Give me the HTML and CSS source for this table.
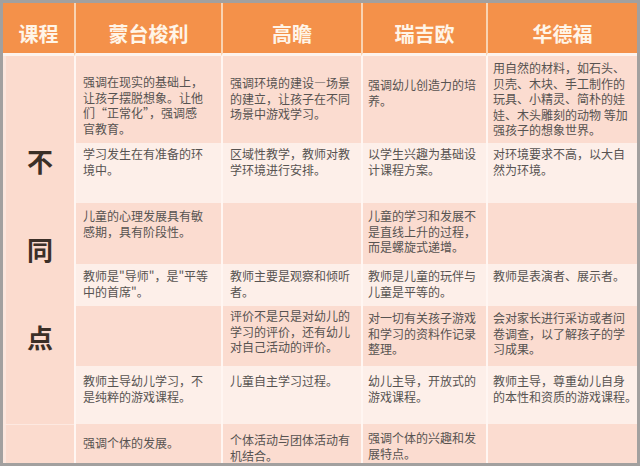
FILE: index.html
```html
<!DOCTYPE html>
<html lang="zh-CN">
<head>
<meta charset="utf-8">
<title>课程对比</title>
<link rel="stylesheet" href="styles.css">
</head>
<body>
<div class="sheet">
  <div class="grid">
    <div class="hd hd-first">课程</div>
    <div class="hd">蒙台梭利</div>
    <div class="hd">高瞻</div>
    <div class="hd">瑞吉欧</div>
    <div class="hd">华德福</div>

    <div class="side">不<br>同<br>点</div>

    <div class="c pk r1 wide">强调在现实的基础上，<br>让孩子摆脱想象。让他<br>们“正常化”，强调感<br>官教育。</div>
    <div class="c pk r1 wide r1b">强调环境的建设—场景<br>的建立，让孩子在不同<br>场景中游戏学习。</div>
    <div class="c pk r1 r1c">强调幼儿创造力的培<br>养。</div>
    <div class="c pk r1 r1d">用自然的材料，如石头、<br>贝壳、木块、手工制作的<br>玩具、小精灵、简朴的娃<br>娃、木头雕刻的动物 等加<br>强孩子的想象世界。</div>

    <div class="c lt r2 wide">学习发生在有准备的环<br>境中。</div>
    <div class="c lt r2 wide">区域性教学，教师对教<br>学环境进行安排。</div>
    <div class="c lt r2">以学生兴趣为基础设<br>计课程方案。</div>
    <div class="c lt r2">对环境要求不高，以大自<br>然为环境。</div>

    <div class="c pk r3 wide">儿童的心理发展具有敏<br>感期，具有阶段性。</div>
    <div class="c pk r3 wide"></div>
    <div class="c pk r3">儿童的学习和发展不<br>是直线上升的过程，<br>而是螺旋式递增。</div>
    <div class="c pk r3"></div>

    <div class="c lt r4 wide">教师是"导师"，是"平等<br>中的首席"。</div>
    <div class="c lt r4 wide">教师主要是观察和倾听<br>者。</div>
    <div class="c lt r4">教师是儿童的玩伴与<br>儿童是平等的。</div>
    <div class="c lt r4">教师是表演者、展示者。</div>

    <div class="c pk r5 wide"></div>
    <div class="c pk r5 wide r5b">评价不是只是对幼儿的<br>学习的评价，还有幼儿<br>对自己活动的评价。</div>
    <div class="c pk r5">对一切有关孩子游戏<br>和学习的资料作记录<br>整理。</div>
    <div class="c pk r5">会对家长进行采访或者问<br>卷调查，以了解孩子的学<br>习成果。</div>

    <div class="c lt r6 wide">教师主导幼儿学习，不<br>是纯粹的游戏课程。</div>
    <div class="c lt r6 wide">儿童自主学习过程。</div>
    <div class="c lt r6">幼儿主导，开放式的<br>游戏课程。</div>
    <div class="c lt r6">教师主导，尊重幼儿自身<br>的本性和资质的游戏课程。</div>

    <div class="side side-end"></div>
    <div class="c pk r7 wide">强调个体的发展。</div>
    <div class="c pk r7 wide r7b">个体活动与团体活动有<br>机结合。</div>
    <div class="c pk r7 r7c">强调个体的兴趣和发<br>展特点。</div>
    <div class="c pk r7"></div>
  </div>
</div>
</body>
</html>
```

FILE: styles.css
```css
html, body {
  margin: 0;
  padding: 0;
  background: #ffffff;
}

body {
  font-family: "Noto Sans CJK SC", "Noto Sans", sans-serif;
}

.sheet {
  width: 640px;
  height: 466px;
  box-sizing: border-box;
  border: 3px solid #a2a09f;
  overflow: hidden;
  background: #fdf3ee;
}

.grid {
  display: grid;
  grid-template-columns: 71px 147px 140px 125px 151px;
  grid-template-rows: 53px 87px 60px 61px 42px 60px 58px 39px;
}

.hd {
  box-sizing: border-box;
  background: #f4914a;
  color: #fff5e8;
  font-weight: bold;
  font-size: 20px;
  line-height: 38px;
  padding-top: 12px;
  text-align: center;
  border-left: 2px solid #f9d3b2;
  border-bottom: 3px solid #fdf3ee;
}

.hd-first {
  border-left: 0;
}

.side {
  grid-row: 2 / span 6;
  box-sizing: border-box;
  background: #fbdbce;
  border-left: 3px solid #fce6dd;
  color: #3b2f27;
  font-weight: bold;
  font-size: 26px;
  line-height: 88px;
  padding-top: 61px;
  text-align: center;
}

.side-end {
  grid-row: auto;
  padding-top: 0;
  border-top: 1px solid #fde9e1;
}

.c {
  box-sizing: border-box;
  border-left: 2px solid #fff6f2;
  color: #575351;
  font-size: 12px;
  line-height: 15.5px;
  white-space: nowrap;
  padding-left: 5px;
}

.wide {
  padding-left: 7px;
}

.pk {
  background: #fbdcd0;
}

.lt {
  background: #fdefe9;
}

.r1 { padding-top: 18px; }
.r1b { padding-top: 19px; }
.r1c { padding-top: 21px; }
.r1d { padding-top: 4px; }
.r2 { padding-top: 3px; }
.r3 { padding-top: 5px; }
.r4 { padding-top: 4px; }
.r5 { padding-top: 4px; }
.r5b { padding-top: 2px; }
.r6 { padding-top: 7px; }
.r7 { padding-top: 11px; }
.r7b { padding-top: 8px; }
.r7c { padding-top: 6px; line-height: 16px; }
```
